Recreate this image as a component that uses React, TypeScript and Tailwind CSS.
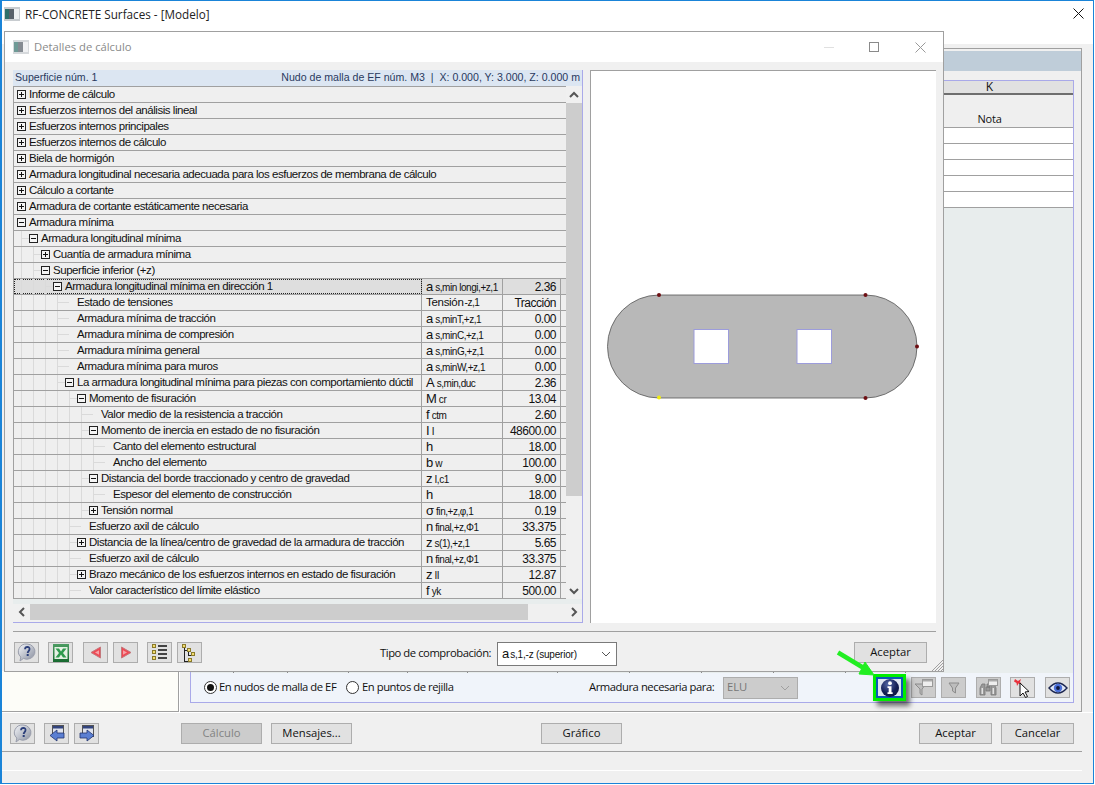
import React from "react";

type Row = { t: string; l: number; k?: "p" | "m"; s?: React.ReactNode; v?: string; sel?: boolean };

const Sym = ({ b, sub, big }: { b: string; sub: string; big?: boolean }) => (
  <span className="whitespace-nowrap text-[#111]">
    <span className={big ? "text-[11.5px] tracking-[-0.3px]" : "text-[13px] tracking-normal"}>{b}</span>
    <span className={`text-[10px] tracking-[-0.45px] ${big ? "ml-[1px]" : "ml-[2px]"}`}>{sub}</span>
  </span>
);

const rows: Row[] = [
  { t: "Informe de cálculo", l: 0, k: "p" },
  { t: "Esfuerzos internos del análisis lineal", l: 0, k: "p" },
  { t: "Esfuerzos internos principales", l: 0, k: "p" },
  { t: "Esfuerzos internos de cálculo", l: 0, k: "p" },
  { t: "Biela de hormigón", l: 0, k: "p" },
  { t: "Armadura longitudinal necesaria adecuada para los esfuerzos de membrana de cálculo", l: 0, k: "p" },
  { t: "Cálculo a cortante", l: 0, k: "p" },
  { t: "Armadura de cortante estáticamente necesaria", l: 0, k: "p" },
  { t: "Armadura mínima", l: 0, k: "m" },
  { t: "Armadura longitudinal mínima", l: 1, k: "m" },
  { t: "Cuantía de armadura mínima", l: 2, k: "p" },
  { t: "Superficie inferior (+z)", l: 2, k: "m" },
  { t: "Armadura longitudinal mínima en dirección 1", l: 3, k: "m", s: <Sym b="a" sub="s,min longi,+z,1" />, v: "2.36", sel: true },
  { t: "Estado de tensiones", l: 4, s: <Sym b="Tensión" sub="-z,1" big />, v: "Tracción" },
  { t: "Armadura mínima de tracción", l: 4, s: <Sym b="a" sub="s,minT,+z,1" />, v: "0.00" },
  { t: "Armadura mínima de compresión", l: 4, s: <Sym b="a" sub="s,minC,+z,1" />, v: "0.00" },
  { t: "Armadura mínima general", l: 4, s: <Sym b="a" sub="s,minG,+z,1" />, v: "0.00" },
  { t: "Armadura mínima para muros", l: 4, s: <Sym b="a" sub="s,minW,+z,1" />, v: "0.00" },
  { t: "La armadura longitudinal mínima para piezas con comportamiento dúctil", l: 4, k: "m", s: <Sym b="A" sub="s,min,duc" />, v: "2.36" },
  { t: "Momento de fisuración", l: 5, k: "m", s: <Sym b="M" sub="cr" />, v: "13.04" },
  { t: "Valor medio de la resistencia a tracción", l: 6, s: <Sym b="f" sub="ctm" />, v: "2.60" },
  { t: "Momento de inercia en estado de no fisuración", l: 6, k: "m", s: <Sym b="I" sub="I" />, v: "48600.00" },
  { t: "Canto del elemento estructural", l: 7, s: <Sym b="h" sub="" />, v: "18.00" },
  { t: "Ancho del elemento", l: 7, s: <Sym b="b" sub="w" />, v: "100.00" },
  { t: "Distancia del borde traccionado y centro de gravedad", l: 6, k: "m", s: <Sym b="z" sub="I,c1" />, v: "9.00" },
  { t: "Espesor del elemento de construcción", l: 7, s: <Sym b="h" sub="" />, v: "18.00" },
  { t: "Tensión normal", l: 6, k: "p", s: <Sym b="σ" sub="fin,+z,φ,1" />, v: "0.19" },
  { t: "Esfuerzo axil de cálculo", l: 5, s: <Sym b="n" sub="final,+z,Φ1" />, v: "33.375" },
  { t: "Distancia de la línea/centro de gravedad de la armadura de tracción", l: 5, k: "p", s: <Sym b="z" sub="s(1),+z,1" />, v: "5.65" },
  { t: "Esfuerzo axil de cálculo", l: 5, s: <Sym b="n" sub="final,+z,Φ1" />, v: "33.375" },
  { t: "Brazo mecánico de los esfuerzos internos en estado de fisuración", l: 5, k: "p", s: <Sym b="z" sub="II" />, v: "12.87" },
  { t: "Valor característico del límite elástico", l: 5, s: <Sym b="f" sub="yk" />, v: "500.00" },
];

const Guides = ({ r }: { r: Row }) => {
  const xs: number[] = [];
  for (let i = 0; i < r.l; i++) xs.push(7.5 + 12 * i);
  const par = 7.5 + 12 * (r.l - 1);
  return (
    <svg className="absolute left-0 top-0" width="200" height="15" shapeRendering="crispEdges">
      {xs.map((x) => (
        <line key={x} x1={x} x2={x} y1="0" y2="15" stroke="#dadada" />
      ))}
      {r.l > 0 && <line x1={par} x2={par + 11} y1="7.5" y2="7.5" stroke="#dadada" />}
    </svg>
  );
};

const Box = ({ k }: { k: "p" | "m" }) => (
  <svg className="relative mr-[3px] shrink-0" width="9" height="9" shapeRendering="crispEdges">
    <rect x="0.5" y="0.5" width="8" height="8" fill="#f4f4f4" stroke="#222" />
    <line x1="2" x2="7" y1="4.5" y2="4.5" stroke="#111" />
    {k === "p" && <line x1="4.5" x2="4.5" y1="2" y2="7" stroke="#111" />}
  </svg>
);

const TreeRow = ({ r }: { r: Row }) => {
  const lead = 3 + 12 * r.l + (r.k ? 0 : 12);
  const cols = r.s !== undefined || r.v !== undefined;
  return (
    <div className={`flex h-[16px] border-t border-[#a0a0a0] text-[11.5px] tracking-[-0.46px] text-[#111] ${r.sel ? "bg-[#dedede]" : "bg-[#efefef]"}`}>
      <div
        className={`relative flex h-[15px] w-[408px] shrink-0 items-center ${cols ? "border-r border-[#a0a0a0]" : ""} ${r.sel ? "outline-1 -outline-offset-1 outline-dotted outline-[#222]" : ""}`}
        style={{ paddingLeft: lead }}
      >
        <Guides r={r} />
        {r.k && <Box k={r.k} />}
        <span className="relative whitespace-nowrap">{r.t}</span>
      </div>
      {cols && (
        <>
          <div className="flex h-[15px] w-[81px] shrink-0 items-center border-r border-[#a0a0a0] pl-[4px]">{r.s}</div>
          <div className="flex h-[15px] w-[58px] shrink-0 items-center justify-end border-r border-[#a0a0a0] pr-[4px] text-[12px] tracking-[-0.5px]">{r.v}</div>
        </>
      )}
    </div>
  );
};

const Chev = ({ d }: { d: "u" | "d" | "l" | "r" }) => {
  const p = { u: "2,8 6,4 10,8", d: "2,4 6,8 10,4", l: "8,2 4,6 8,10", r: "4,2 8,6 4,10" }[d];
  return (
    <svg width="12" height="12">
      <polyline points={p} fill="none" stroke="#555" strokeWidth="2" />
    </svg>
  );
};

const Btn = ({ children, w, dis, cls = "" }: { children?: React.ReactNode; w: string; dis?: boolean; cls?: string }) => (
  <div className={`flex h-[21px] shrink-0 items-center justify-center whitespace-nowrap border border-[#adadad] ${w} ${dis ? "bg-[#cccccc] text-[#838383]" : "bg-[#e1e1e1] text-[#111]"} ${cls}`}>{children}</div>
);

const HelpI = () => (
  <svg width="20" height="19" viewBox="0 0 20 19">
    <defs>
      <linearGradient id="hg" x1="0" y1="0" x2="1" y2="1">
        <stop offset="0" stopColor="#f4f6fa" />
        <stop offset="1" stopColor="#868c9c" />
      </linearGradient>
    </defs>
    <path d="M10 1a8 7.6 0 1 1-3.6 14.4L3 18l.8-4A8 7.6 0 0 1 10 1z" fill="url(#hg)" stroke="#9a9eac" />
    <path d="M8 6.2Q8.2 3.8 10.3 3.8q2.4.2 2.2 2.4c0 1.8-1.8 2-1.8 3.8" fill="none" stroke="#2c3f7a" strokeWidth="1.8" />
    <rect x="9.7" y="11" width="2" height="2" fill="#2c3f7a" />
  </svg>
);
const ExcelI = () => (
  <svg width="16" height="18" viewBox="0 0 16 18">
    <defs>
      <linearGradient id="xg" x1="0" y1="0" x2="0" y2="1">
        <stop offset="0" stopColor="#4c9c62" />
        <stop offset="1" stopColor="#17692f" />
      </linearGradient>
    </defs>
    <rect x="0" y="0" width="16" height="18" fill="url(#xg)" />
    <rect x="1.5" y="3" width="13" height="12" fill="#e6f1e4" />
    <path d="M2.5 4.5h3.5L8 7.5l2-3h3.5L10 9l3.5 4.5H10L8 10.5l-2 3H2.5L6 9z" fill="#2f9a4e" />
  </svg>
);
const Tri = ({ left }: { left?: boolean }) => (
  <svg width="12" height="13" viewBox="0 0 12 13">
    <g transform={left ? undefined : "translate(12,0) scale(-1,1)"}>
      <path d="M1 6.5 10.5 1v11z" fill="#ee4a55" stroke="#c4787c" />
      <path d="M5 6.5 9 4.2v4.6z" fill="#f6a2a6" />
    </g>
  </svg>
);
const ListI = () => (
  <svg width="15" height="17" viewBox="0 0 15 17" shapeRendering="crispEdges">
    {[0, 6, 12].map((y) => (
      <rect key={y} x="0.5" y={y + 0.5} width="3" height="3" fill="#f2dc6e" stroke="#8a7a2a" />
    ))}
    {[1, 5, 9, 13].map((y) => (
      <rect key={y} x="6" y={y} width="9" height="1.5" fill="#444" />
    ))}
  </svg>
);
const TreeI = () => (
  <svg width="15" height="18" viewBox="0 0 15 18" shapeRendering="crispEdges">
    <path d="M2 1v16h5M2 6h4M6 6v5h4" fill="none" stroke="#222" />
    {[[0, 0], [5, 4], [9, 8], [6, 14]].map(([x, y]) => (
      <rect key={x} x={x + 0.5} y={y + 0.5} width="3" height="3" fill="#f2dc6e" stroke="#8a7a2a" />
    ))}
  </svg>
);
const WinArrow = ({ right }: { right?: boolean }) => (
  <svg width="16" height="17" viewBox="0 0 16 17">
    <rect x="3.5" y="0.5" width="11" height="11" fill="#dfe3ee" stroke="#555" />
    <rect x="4" y="1" width="10" height="2.5" fill="#33457e" />
    <g transform={right ? "translate(1,0)" : "translate(15,0) scale(-1,1)"}>
      <path d="M0 8h7V5l7 5.5L7 16v-3H0z" fill="#5b7fd2" stroke="#22346e" strokeWidth="0.8" />
    </g>
  </svg>
);
const InfoI = () => (
  <svg width="20" height="20" viewBox="0 0 20 20">
    <defs>
      <radialGradient id="ig" cx="0.4" cy="0.3" r="0.8">
        <stop offset="0" stopColor="#5569a8" />
        <stop offset="0.6" stopColor="#141f56" />
        <stop offset="1" stopColor="#0c1338" />
      </radialGradient>
    </defs>
    <circle cx="10" cy="10" r="9" fill="url(#ig)" />
    <circle cx="10" cy="5.2" r="1.9" fill="#fff" />
    <path d="M7.5 8.3h4v6h1.2v1.8H7.5v-1.8h1.2V10H7.5z" fill="#fff" />
  </svg>
);
const FunnelI = ({ win }: { win?: boolean }) => (
  <svg width="20" height="19" viewBox="0 0 20 19">
    <path d={win ? "M1 6h11L8 11v6l-2-1.5V11z" : "M5 5h10l-3.5 5v5l-3-2v-3z"} fill="#bdbdbd" stroke="#8c8c8c" />
    {win && (
      <>
        <rect x="8.5" y="1.5" width="10" height="7" fill="#eee" stroke="#999" />
        <rect x="9" y="2" width="9" height="1.5" fill="#aaa" />
      </>
    )}
  </svg>
);
const BinoI = () => (
  <svg width="20" height="19" viewBox="0 0 20 19">
    <path d="M3 6h3v11H1v-7zM8 6h3v3H8zM12 6h3l2 4v7h-5zM7 9h4v4H7z" fill="#999" stroke="#777" strokeWidth="0.8" />
    <rect x="2.5" y="10" width="1.5" height="6" fill="#e2e2e2" />
    <rect x="13.5" y="10" width="1.5" height="6" fill="#e2e2e2" />
    <rect x="9.5" y="1.5" width="9" height="6" fill="#eee" stroke="#999" />
    <rect x="10" y="2" width="8" height="1.5" fill="#aaa" />
  </svg>
);
const PickI = () => (
  <svg width="20" height="20" viewBox="0 0 20 20">
    <path d="M2 1l3 2 3-2-1 3 1.5 2-3-.5L4 8l-.5-3L1 3.5z" fill="#e8323c" />
    <path d="M7 5l9 8.5-4 .5 2.5 4.5-2 1L10 15l-3 3z" fill="#fff" stroke="#111" />
  </svg>
);
const EyeI = () => (
  <svg width="20" height="14" viewBox="0 0 20 14">
    <path d="M1 7Q10-3 19 7 10 17 1 7z" fill="#dfe6f5" stroke="#1b2650" strokeWidth="1.4" />
    <circle cx="10" cy="7" r="4.2" fill="#4a6fd8" />
    <circle cx="10" cy="7" r="1.9" fill="#10183e" />
  </svg>
);

const gridCols = Array.from({ length: 12 });
const whiteRows = [0, 1, 2, 3, 4];

export default function App() {
  return (
    <div className="relative h-[785px] w-[1095px] overflow-hidden bg-white font-['Open_Sans','Noto_Sans',sans-serif] text-[11.25px] text-[#111]">
      <div className="flex h-[784px] w-[1094px] flex-col border-b border-l-2 border-r border-t border-[#1a84d8] bg-[#f0f0f0]">
        {/* main title */}
        <div className="flex h-[43px] shrink-0 items-start bg-white pl-[2px] pt-[5px]">
          <svg className="mr-[5px] mt-[1px]" width="16" height="14" viewBox="0 0 16 14" shapeRendering="crispEdges">
            <rect width="16" height="14" fill="#c8ccd0" />
            <rect x="1" y="2" width="4" height="10" fill="#2f6f6a" />
            <rect x="5" y="2" width="5" height="10" fill="#59616a" />
            <rect x="10" y="2" width="5" height="10" fill="#eef0f2" />
          </svg>
          <span className="text-[11.7px] leading-[17px] text-[#222]">RF-CONCRETE Surfaces - [Modelo]</span>
          <svg className="ml-auto mr-[9px] mt-[2px]" width="11" height="11" viewBox="0 0 11 11">
            <path d="M0.5 0.5l10 10M10.5 0.5l-10 10" stroke="#111" />
          </svg>
        </div>

        {/* background panes */}
        <div className="flex h-[668px] shrink-0 pt-[4px]">
          <div className="flex w-[177px] shrink-0 flex-col border-b border-r border-[#a0a0a0]">
            <div className="h-[623px] shrink-0" />
            <div className="flex-1 bg-[#fdfdf8]" />
          </div>
          <div className="w-px shrink-0 bg-white" />
          <div className="flex w-[902px] shrink-0 flex-col border-b border-r border-t border-[#a0a0a0] pt-[2px]">
            <div className="h-[20px] shrink-0 bg-[#bfcdd9]" />
            <div className="ml-[10px] mr-[7px] mt-[9px] border-l border-r border-t border-[#a9a9e9]">
              <div className="grid grid-cols-[43px_54px_61px_59px_60px_90px_72px_72px_72px_72px_60px_167px] grid-rows-[14px_33px_16px_16px_16px_16px_16px_465px]">
                {gridCols.map((_, i) => (
                  <div key={i} className="flex items-center justify-center border-b-2 border-[#6e6e6e] bg-[#e1e1e1] text-[12px] leading-none">{i === 11 ? "K" : ""}</div>
                ))}
                {gridCols.map((_, i) => (
                  <div key={i} className="flex items-end justify-center border-b border-[#a0a0a0] bg-[#efefef] text-[11px] tracking-[-0.2px]">{i === 11 ? "Nota" : ""}</div>
                ))}
                {whiteRows.map((r) =>
                  gridCols.map((_, i) => <div key={`${r}-${i}`} className="border-b border-[#a0a0a0] bg-white" />)
                )}
                {gridCols.map((_, i) => (
                  <div key={i} className={`${i < 11 ? "border-r border-[#8a8a8a]" : ""} bg-[#e8eded]`} />
                ))}
              </div>
              <div className="flex h-[30px] items-center whitespace-nowrap border-b border-[#a9a9e9] bg-[#f0f4fa] pl-[13px] tracking-[-0.45px]">
                <span className="flex h-[13px] w-[13px] shrink-0 items-center justify-center rounded-full border border-[#333] bg-white">
                  <span className="h-[7px] w-[7px] rounded-full bg-[#111]" />
                </span>
                <span className="ml-[2px] w-[127px] shrink-0">En nudos de malla de EF</span>
                <span className="h-[13px] w-[13px] shrink-0 rounded-full border border-[#333] bg-white" />
                <span className="ml-[3px] w-[227px] shrink-0">En puntos de rejilla</span>
                <span className="w-[134px] shrink-0">Armadura necesaria para:</span>
                <div className="flex h-[22px] w-[75px] shrink-0 items-center justify-between border border-[#adadad] bg-[#cccccc] pl-[3px] pr-[7px] tracking-normal text-[#777]">
                  ELU
                  <svg width="10" height="6"><polyline points="1,1 5,5 9,1" fill="none" stroke="#a0a0a0" /></svg>
                </div>
                <div className="relative ml-[75px] flex h-[27px] w-[33px] shrink-0 items-center justify-center border-[3px] border-[#00ee00] shadow-[4px_5px_5px_rgba(0,0,0,0.55)]">
                  <div className="flex h-full w-full items-center justify-center border-2 border-[#0b59b4] bg-[#dfe6f0]">
                    <InfoI />
                  </div>
                </div>
                <Btn w="w-[25px]" dis cls="ml-[5px]"><FunnelI win /></Btn>
                <Btn w="w-[25px]" dis cls="ml-[5px]"><FunnelI /></Btn>
                <Btn w="w-[25px]" dis cls="ml-[10px]"><BinoI /></Btn>
                <Btn w="w-[25px]" cls="ml-[9px]"><PickI /></Btn>
                <Btn w="w-[25px]" cls="ml-[10px]"><EyeI /></Btn>
              </div>
            </div>
          </div>
        </div>

        {/* footer */}
        <div className="flex flex-1 flex-col border-t border-white">
          <div className="mt-[10px] flex items-center pl-[8px]">
            <Btn w="w-[25px]"><HelpI /></Btn>
            <Btn w="w-[25px]" cls="ml-[9px]"><WinArrow /></Btn>
            <Btn w="w-[25px]" cls="ml-[5px]"><WinArrow right /></Btn>
            <Btn w="w-[81px]" dis cls="ml-[82px]">Cálculo</Btn>
            <Btn w="w-[81px]" cls="ml-[9px]">Mensajes...</Btn>
            <Btn w="w-[81px]" cls="ml-[189px]">Gráfico</Btn>
            <Btn w="w-[73px]" cls="ml-[297px]">Aceptar</Btn>
            <Btn w="w-[73px]" cls="ml-[9px]">Cancelar</Btn>
          </div>
          <div className="mt-[7px] h-[20px] w-[1080px] border-b border-t border-b-white border-t-[#a0a0a0]" />
        </div>
      </div>

      {/* calculation details dialog */}
      <div className="absolute left-[4px] top-[31px] flex h-[641px] w-[940px] flex-col border border-[#a0a0a0] bg-[#f0f0f0]">
        <div className="flex h-[30px] shrink-0 items-center bg-white pl-[8px]">
          <svg className="mr-[5px]" width="16" height="14" viewBox="0 0 16 14" shapeRendering="crispEdges">
            <rect width="16" height="14" fill="#d6d9dc" />
            <rect x="1" y="2" width="4" height="10" fill="#6f9a96" />
            <rect x="5" y="2" width="5" height="10" fill="#858b92" />
            <rect x="10" y="2" width="5" height="10" fill="#f0f1f3" />
          </svg>
          <span className="text-[11.25px] text-[#8a8a8a]">Detalles de cálculo</span>
          <div className="ml-auto flex items-center pr-[17px]">
            <span className="h-px w-[10px] bg-[#e0e0e0]" />
            <span className="ml-[35px] h-[10px] w-[10px] border border-[#8a8a8a]" />
            <svg className="ml-[36px]" width="11" height="11" viewBox="0 0 11 11">
              <path d="M0.5 0.5l10 10M10.5 0.5l-10 10" stroke="#999" />
            </svg>
          </div>
        </div>

        <div className="flex flex-1 flex-col pl-[8px] pr-[7px] pt-[8px]">
          <div className="flex h-[553px] shrink-0">
            <div className="flex w-[570px] shrink-0 flex-col border-b border-r border-[#a9a9e9]">
              <div className="flex h-[16px] shrink-0 items-center justify-between bg-[#dce6f2] pl-[2px] pr-[2px] text-[10.6px] text-[#2a3a5e] font-['Liberation_Sans',sans-serif]">
                <span>Superficie núm. 1</span>
                <span>Nudo de malla de EF núm. M3&nbsp; |&nbsp; X: 0.000, Y: 3.000, Z: 0.000 m</span>
              </div>
              <div className="flex h-[513px] shrink-0">
                <div className="w-[553px] shrink-0 border-b border-l border-[#a0a0a0] font-['Liberation_Sans',sans-serif]">
                  {rows.map((r, i) => (
                    <TreeRow key={i} r={r} />
                  ))}
                </div>
                <div className="flex w-[16px] shrink-0 flex-col items-center bg-[#f0f0f0]">
                  <div className="flex h-[17px] w-full items-center justify-center"><Chev d="u" /></div>
                  <div className="h-[393px] w-full bg-[#cdcdcd]" />
                  <div className="flex-1" />
                  <div className="flex h-[17px] w-full items-center justify-center"><Chev d="d" /></div>
                </div>
              </div>
              <div className="h-[5px] shrink-0 bg-[#e8eded]" />
              <div className="flex h-[16px] shrink-0 items-center">
                <div className="flex w-[17px] justify-center"><Chev d="l" /></div>
                <div className="h-full w-[498px] bg-[#cdcdcd]" />
                <div className="flex flex-1 justify-end pr-[2px]"><Chev d="r" /></div>
              </div>
            </div>
            <div className="ml-[7px] flex-1 border-l border-t border-[#a0a0a0] bg-white">
              <svg width="344" height="552" viewBox="591 71 344 552" className="block">
                <path d="M659 295H865.5A51.5 51.5 0 0 1 865.5 398H659A51.5 51.5 0 0 1 659 295z" fill="#b8b8b8" stroke="#555" strokeWidth="0.8" />
                <rect x="694" y="329.5" width="34.5" height="34" fill="#fff" stroke="#9c9cdc" />
                <rect x="797" y="329.5" width="34.5" height="34" fill="#fff" stroke="#9c9cdc" />
                {[[659, 295], [865.5, 295], [865.5, 398], [917, 346.5]].map(([x, y]) => (
                  <circle key={`${x}-${y}`} cx={x} cy={y} r="2" fill="#6e1014" />
                ))}
                <circle cx="659" cy="397.5" r="2" fill="#f0ec10" />
              </svg>
            </div>
          </div>
          <div className="mt-[8px] flex h-[39px] shrink-0 items-start border-t border-[#a0a0a0] pl-[1px] pt-[10px]">
            <Btn w="w-[25px]"><HelpI /></Btn>
            <Btn w="w-[25px]" cls="ml-[9px]"><ExcelI /></Btn>
            <Btn w="w-[25px]" cls="ml-[10px]"><Tri left /></Btn>
            <Btn w="w-[25px]" cls="ml-[5px]"><Tri /></Btn>
            <Btn w="w-[25px]" cls="ml-[9px]"><ListI /></Btn>
            <Btn w="w-[25px]" cls="ml-[5px]"><TreeI /></Btn>
            <span className="ml-[178px] w-[117px] shrink-0 whitespace-nowrap leading-[21px] tracking-[-0.45px]">Tipo de comprobación:</span>
            <div className="flex h-[24px] w-[120px] shrink-0 items-center justify-between border border-[#7a7a7a] bg-white pl-[4px] pr-[5px] font-['Liberation_Sans',sans-serif]">
              <span className="whitespace-nowrap"><span className="text-[13px]">a</span><span className="ml-[1px] text-[10px] tracking-[-0.2px]">s,1,-z (superior)</span></span>
              <svg width="10" height="6"><polyline points="1,1 5,5 9,1" fill="none" stroke="#555" /></svg>
            </div>
            <Btn w="w-[73px]" cls="ml-[237px]">Aceptar</Btn>
          </div>
        </div>
        <svg className="absolute bottom-0 right-0" width="11" height="11" viewBox="0 0 11 11">
          <path d="M11 0L0 11M11 3L3 11M11 6L6 11M11 9L9 11" stroke="#a0a0a0" />
        </svg>
      </div>

      {/* green call-out arrow */}
      <svg className="absolute left-[836px] top-[650px]" width="40" height="28" viewBox="0 0 40 28">
        <path d="M2 2.5 31 20" stroke="#22ee22" strokeWidth="4.5" />
        <path d="M38 25 29 12 23 24z" fill="#22ee22" stroke="#22ee22" />
      </svg>
    </div>
  );
}
